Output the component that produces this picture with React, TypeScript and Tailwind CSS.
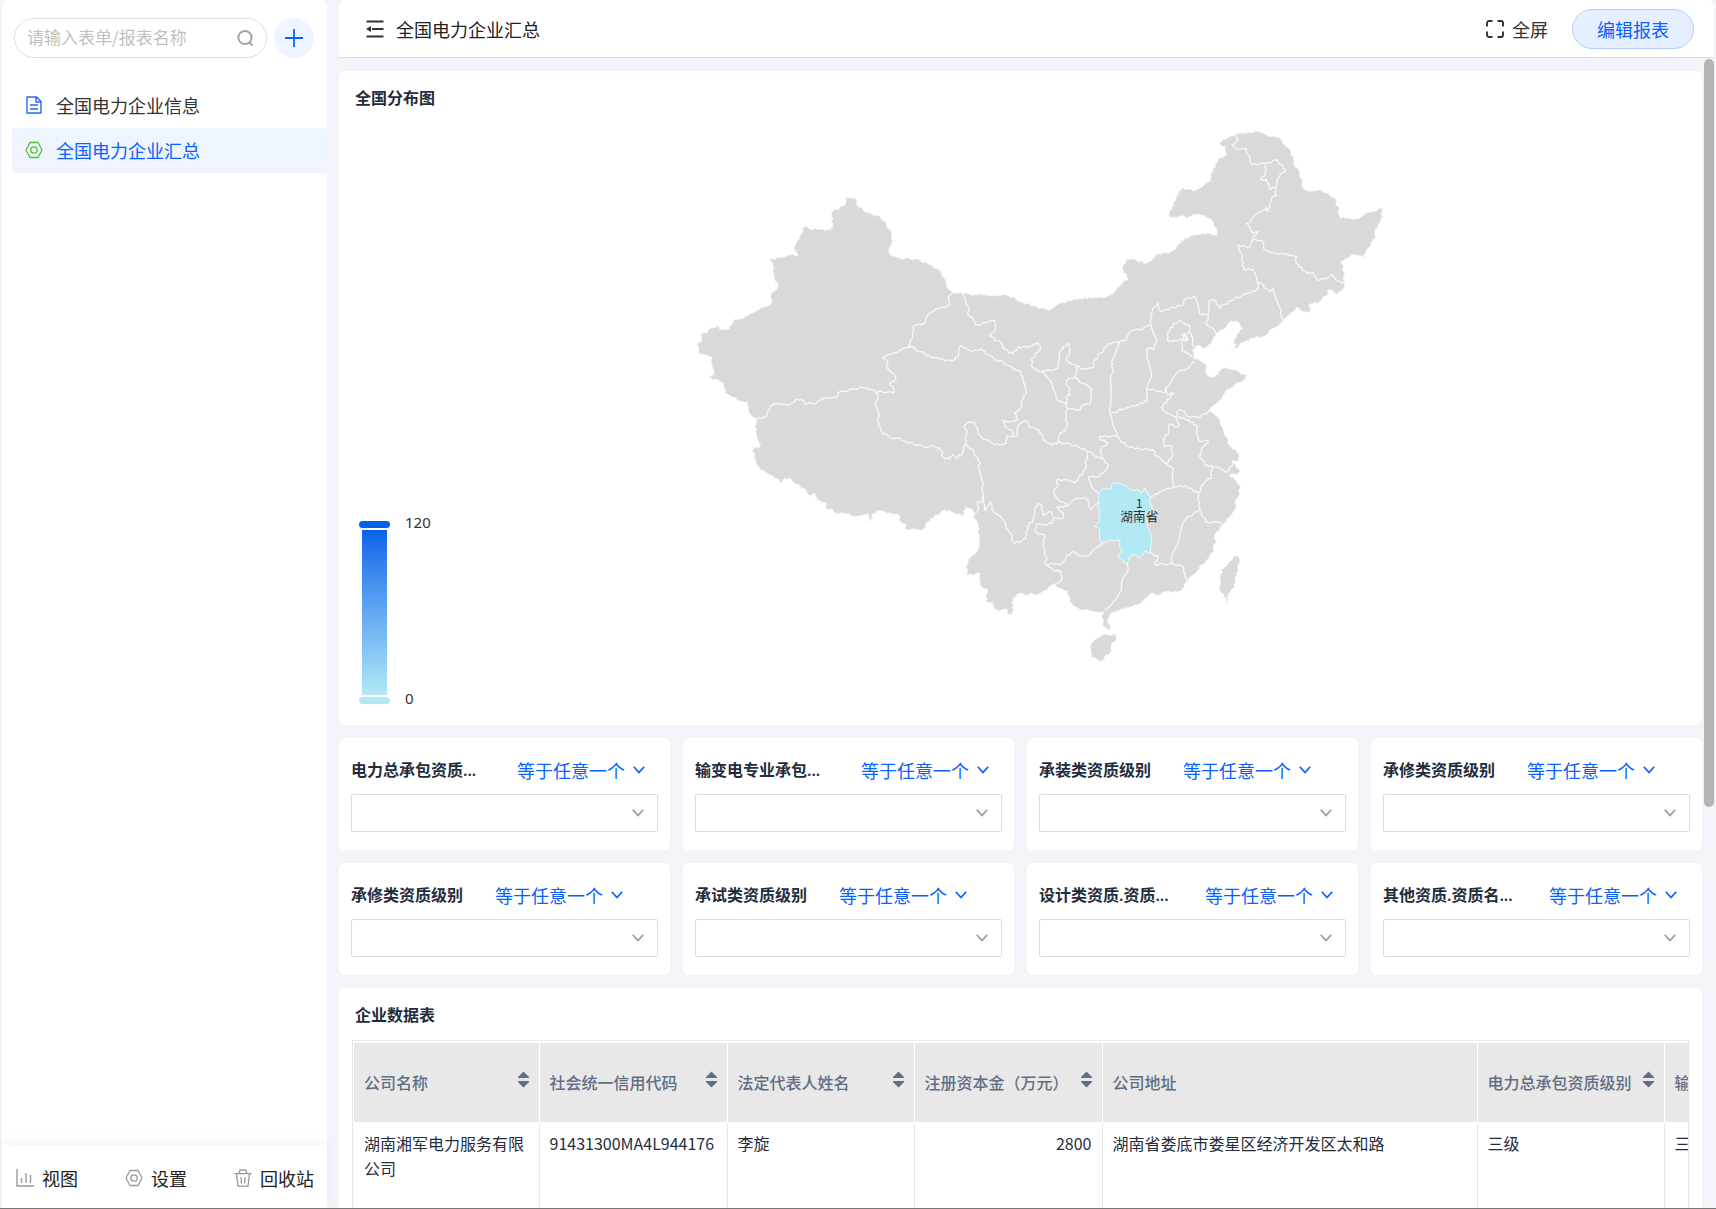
import type { ReactNode } from "react"

type Part = [number, number, string]

// country outline, traced clockwise: [offset x, offset y, points]
const outline: Part[] = [
    [1260, 0, "358,100 370,89 390,78 405,75 440,70 465,65 485,67 500,74 510,80 530,82 545,90 555,105 570,118 573,135 583,150 585,170 600,188 602,205 608,215 607,230 620,242 640,242 660,240 690,255 710,272 708,280 718,292 715,303 725,325 745,323 775,327 795,313 820,305 852,294 845,312 850,322 835,343 825,365 827,378 818,395 808,412 800,425 792,443 770,435 757,433 745,445 725,453 730,475 734,495 733,518 730,538 712,553 705,550 697,540 685,540 685,555 670,560 660,575 630,582 630,605 612,605 590,593 575,608 550,632 520,655 492,678 460,685 430,697 413,713 395,726 412,705 402,695 410,680 430,655 420,640 412,634 395,632 375,655 350,668"],
    [780, 510, "828,160 820,180 805,200 790,208 782,198 770,197 758,212 762,235 790,248 802,258 800,280 815,292 830,285 842,272 860,262 880,270 900,278 920,285 915,300 890,310 865,328 850,345 830,370 808,392 840,420 850,450 865,480 868,495 895,520 900,545 875,540 880,548 900,570 895,580 870,585 885,600 900,615 900,640 888,660 885,690 865,715 850,735 825,765 828,790 820,800 822,815 800,840 785,855 775,870 760,885 740,902 730,925 710,935 680,935 655,945 635,940 615,955 605,970 570,980 540,990 510,1003 503,1020 513,1040 505,1050 492,1040 488,1015 490,995 450,992 415,985 395,968 385,945 385,932 355,925 345,912 325,925 305,938 290,945 275,938 265,945 240,940 218,955 220,1005 205,1005 200,985 180,995 165,985 160,968 138,965 145,930 125,920 122,880 82,885 82,855 85,840 115,810 118,770 115,735 108,718"],
    [0, 210, "885,1018 880,990 870,985 858,980 848,1010 820,995 795,990 770,1005 745,1025 730,1048 680,1050 675,1030 658,1020 660,1005 635,1000 600,992 580,1000 568,1030 565,1000 520,1008 490,998 475,1003 460,990 440,985 440,970 412,960 408,942 388,945 378,930 350,912 330,895 315,895 308,908 290,895 265,880 240,865 230,850 218,800 235,805 243,795 228,755 230,715 210,700 203,665 180,662 150,645 135,642 132,610 115,600 85,592 103,585 97,560 95,530 62,523 52,492 65,485 62,465 85,455 95,443 115,438 120,450 150,445 163,418 190,417 215,400 245,383 275,370 275,342 295,320 285,290 280,255 270,240 300,233 325,225 355,228 345,208 360,175 372,140 395,150 425,148 435,153 458,143 457,95 480,85 497,72 498,55 528,53 530,72 550,90 575,102 600,110 617,125 620,140 637,160 635,190 627,210 632,225 660,235 715,238 750,255 780,272 790,290 800,315 818,338 848,340"],
    [780, 510, "110,45 190,45 225,52 240,65 290,80 325,90 370,68 420,55 500,52 525,35 545,12"],
    [1260, 0, "85,505 68,475 80,450 95,447 140,460 175,432 200,430 230,413 245,392 270,380 310,370 352,375 350,355 330,325 300,312 280,313 265,325 245,317 215,323 207,313 217,290 245,233 280,243 310,230 333,213 333,195 355,150 380,135 378,110"],
]

const taiwan: Part = [780, 510, "895,828 885,828 868,845 850,865 840,895 840,930 855,950 862,972 865,940 882,925 890,880 898,850 898,835"]
const hainan: Part = [780, 510, "470,1075 490,1065 528,1062 530,1078 515,1095 515,1115 500,1125 485,1143 455,1130 453,1098"]
const hunan: Part = [780, 510, "475,640 490,625 515,625 520,610 535,610 560,618 575,632 595,630 605,640 618,625 625,645 635,650 632,670 640,690 615,705 622,740 635,770 632,820 615,815 595,835 590,825 570,830 565,848 550,848 545,835 535,830 545,815 540,780 515,780 485,790 480,745 462,740 480,725 475,680"]

const westBorders = [
    "818,338 808,347 810,373 795,382 778,385 765,390 745,405 733,430 703,437 698,465 692,490 683,503",
    "683,503 655,515 620,527 608,533 622,540 623,565 640,580 650,597 632,607 630,615 641,625 640,640 605,633 590,640",
    "590,640 575,628 548,622 520,628 480,635 470,653 440,653 410,670 375,670 365,658 350,657 330,675 280,670 265,690 260,710 232,717",
    "590,640 595,650 587,675 597,695 595,735 605,755 630,772 655,773 680,788 715,795 735,802 760,795 785,812 790,832 810,838 820,825 830,835 850,818 855,795",
    "683,503 705,500 712,513 735,520 755,533 785,535 815,545 835,530 843,497 880,515 905,505 925,525 945,540 970,545 1000,565 1020,572 1030,595 1040,635 1028,660 1022,685 1005,700 1015,718 990,725 968,720 975,740 1000,755 995,770 980,768",
    "855,795 862,760 853,740 868,725 885,730 900,765 935,790 960,795 980,790 983,768",
    "1000,770 1015,765 1015,738 1040,722 1050,742 1080,750 1090,780 1115,795 1135,787",
    "848,340 868,388 863,398 885,425 888,435 920,428 945,422 948,445 930,467 965,490 970,505 1000,522 1015,500 1045,503 1075,487 1082,505 1055,540 1058,562 1085,577",
    "855,795 880,808 895,840 902,852 895,860 905,885 910,940 908,965 895,965 895,990 885,1000",
    "908,950 918,992 930,965 945,1000 965,1010 985,1050 1005,1090 1038,1078 1043,1040 1060,1020 1062,1005 1075,970 1088,980 1088,1005 1115,995 1118,1010",
]

const eastBorders = [
    "305,275 325,270 355,265 358,225 370,200 390,192 392,210 380,240 410,258 405,293 385,298 380,315 390,325 390,345 380,350 380,375 350,355 340,320 318,285 305,275",
    "410,258 440,268 462,262 465,240 500,200 508,190 540,185",
    "405,293 430,310 452,325 450,372 425,378 422,390 385,385 380,375",
    "385,385 378,400 382,440 360,465 355,487",
    "540,185 530,215 515,245 520,270 513,300 515,360 508,400",
    "540,185 560,178 575,153 605,150 635,135 632,105 645,80 655,68 663,95 700,82 730,75 740,55 765,50 775,70 778,100 805,105 812,60 830,65 838,85 870,62 920,42 950,30 960,8",
    "805,105 800,130 820,145 828,160",
    "635,135 640,160 650,180 645,205 625,205 620,235 635,275 630,305 620,325 620,365 590,375 560,383 510,403",
    "620,325 675,338 680,322 685,345 702,340 665,383 685,400 710,410",
    "680,322 695,305 710,280 750,260 765,245",
    "683,160 690,150 705,130 722,120 735,130 748,135 748,155 735,165 740,180 720,178 700,185 683,180 683,160",
    "748,155 760,175 758,190 765,200",
    "735,165 725,190 727,215 740,220 758,228",
    "725,165 735,160 745,180 730,183",
    "510,403 520,430 532,468 480,470 485,480 505,490 485,505 485,535 445,515",
    "355,487 385,490 415,500 445,515",
    "532,468 560,498 600,508 640,510 650,528 680,550",
    "710,410 720,435 705,440 690,432 688,455 670,480 675,500 697,500 697,530 680,550 700,565 702,620",
    "710,410 715,392 735,395 745,410 780,413 808,392",
    "710,410 735,415 770,435 775,470 780,485 800,480 805,490 790,500 780,525 795,555 820,560 865,575 880,548",
    "820,560 815,595 795,605 775,640 780,690",
    "635,650 670,632 702,620 740,618 775,640",
    "445,515 443,530 435,570 405,610 385,600 350,600 355,615 342,635 358,660 385,678 410,655 440,655 455,690 475,670",
    "485,535 503,550 500,570 475,590 447,590 455,620 475,640",
    "385,678 350,682 372,700 370,715 340,715 338,730 290,735 288,755 315,768 310,800 320,830 318,855",
    "318,855 340,850 360,855 380,830 400,815 425,830 450,825 475,800 490,790",
    "318,855 340,870 365,875 365,900 345,912",
    "565,848 565,870 545,910 545,930 520,965 495,990",
    "780,690 740,715 720,755 715,790 700,820 695,850",
    "780,690 798,725 825,725 850,735",
    "630,820 655,828 645,855 695,850 730,860 740,902",
]

const northBorders = [
    "405,75 415,90 397,105 415,118 440,115 453,160 475,165 498,160 530,150 558,178 535,205 528,232 512,238 500,208 483,208 498,195 498,163",
    "530,232 530,258 515,265 505,305 500,292 440,340 460,370 475,365 460,380 460,390",
    "460,390 445,413 415,405 425,430 432,478 460,478 472,518 480,518",
    "460,390 488,392 492,415 510,428 550,430 590,440 590,460 620,490 640,488 655,513 700,495 710,512 733,518",
    "480,518 510,545 520,535 545,600 548,632",
]

const toPoints = ([dx, dy, list]: Part) =>
    list.split(" ").map((p) => {
        const [x, y] = p.split(",").map(Number)
        return [x + dx, y + dy]
    })

// breaks long edges into small steps, so coasts and borders are not ruler straight
function jagged(points: number[][], closed = false) {
    const src = closed ? [...points, points[0]] : points
    let d = `M${src[0].join(" ")}`
    for (let i = 1; i < src.length; i++) {
        const [x0, y0] = src[i - 1]
        const [x1, y1] = src[i]
        const len = Math.hypot(x1 - x0, y1 - y0)
        const steps = Math.max(1, Math.round(len / 7))
        for (let s = 1; s < steps; s++) {
            const x = x0 + ((x1 - x0) * s) / steps
            const y = y0 + ((y1 - y0) * s) / steps
            const k = Math.sin(x * 12.9 + y * 78.2) * 3
            d += `L${(x - ((y1 - y0) / len) * k).toFixed(1)} ${(y + ((x1 - x0) / len) * k).toFixed(1)}`
        }
        d += `L${x1} ${y1}`
    }
    return closed ? d + "Z" : d
}

const landPath = jagged(outline.flatMap(toPoints), true)
const borderPath = [
    ...westBorders.map((b) => toPoints([0, 210, b])),
    ...eastBorders.map((b) => toPoints([780, 510, b])),
    ...northBorders.map((b) => toPoints([1260, 0, b])),
].map((b) => jagged(b)).join("")

const filters = [
    { id: 1, label: "电力总承包资质...", clipped: true },
    { id: 2, label: "输变电专业承包...", clipped: true },
    { id: 3, label: "承装类资质级别", clipped: false },
    { id: 4, label: "承修类资质级别", clipped: false },
    { id: 5, label: "承修类资质级别", clipped: false },
    { id: 6, label: "承试类资质级别", clipped: false },
    { id: 7, label: "设计类资质.资质...", clipped: true },
    { id: 8, label: "其他资质.资质名...", clipped: true },
]

const columns = [
    { title: "公司名称", sort: true },
    { title: "社会统一信用代码", sort: true },
    { title: "法定代表人姓名", sort: true },
    { title: "注册资本金（万元）", sort: true },
    { title: "公司地址", sort: false },
    { title: "电力总承包资质级别", sort: true },
    { title: "输变电专业承包", sort: false },
]

const row = ["湖南湘军电力服务有限公司", "91431300MA4L944176", "李旋", "2800", "湖南省娄底市娄星区经济开发区太和路", "三级", "三级"]

function Icon({ children, className, box = 18 }: { children: ReactNode; className: string; box?: number }) {
    return (
        <svg viewBox={`0 0 ${box} ${box}`} width={box} height={box} fill="none" stroke="currentColor" className={`shrink-0 ${className}`} aria-hidden="true">
            {children}
        </svg>
    )
}

function HexIcon({ className }: { className: string }) {
    return (
        <Icon className={className}>
            <path d="M5 1.5h8L17 9l-4 7.5H5L1 9z" strokeWidth="1.3" strokeLinejoin="round" />
            <circle cx="9" cy="9" r="3.2" strokeWidth="1.3" />
        </Icon>
    )
}

function Chevron({ className }: { className: string }) {
    return (
        <svg viewBox="0 0 12 8" width="12" height="8" fill="none" stroke="currentColor" strokeWidth="1.7" className={`pointer-events-none absolute top-1/2 -translate-y-1/2 ${className}`} aria-hidden="true">
            <path d="M0.8 0.8L6 6.6l5.2-5.8" />
        </svg>
    )
}

function Sidebar() {
    return (
        <aside className="flex w-[325px] shrink-0 flex-col rounded-t-md bg-white">
            <div className="flex items-center gap-[7px] pt-[18px] pr-[13px] pl-3">
                <label className="flex h-10 min-w-0 flex-1 items-center rounded-full border border-[#dedede] pr-3 pl-3">
                    <input type="text" placeholder="请输入表单/报表名称" aria-label="请输入表单/报表名称" className="min-w-0 flex-1 pb-[2px] text-[17px] outline-none placeholder:text-[#bfbfbf]" />
                    <Icon className="text-[#a3a3a3]">
                        <circle cx="9" cy="8.5" r="6.600" strokeWidth="2" />
                        <path d="M13 13l3.500 3.500" strokeWidth="2" />
                    </Icon>
                </label>
                <button type="button" aria-label="新建" className="flex size-10 items-center justify-center rounded-full bg-[#eef5ff] text-[#0a5fff]">
                    <Icon className="">
                        <path d="M9 0v18M0 9h18" strokeWidth="1.8" />
                    </Icon>
                </button>
            </div>
            <nav className="flex-1 pt-[25px] pl-[10px] text-lg">
                <a href="#info" className="flex h-[45px] items-center gap-[13px] pb-px pl-[13px] text-[#333]">
                    <Icon className="text-[#2468f2]">
                        <path d="M2 1h9.500L16 5.500V17H2zM11 1v5h5M5 9h8M5 13h8" strokeWidth="1.4" strokeLinejoin="round" />
                    </Icon>
                    全国电力企业信息
                </a>
                <a href="#summary" className="flex h-[45px] items-center gap-[13px] rounded-l bg-[#eef5ff] pb-px pl-[13px] text-[#0a5fff]">
                    <HexIcon className="text-[#56c02b]" />
                    全国电力企业汇总
                </a>
            </nav>
            <div className="flex h-[63px] items-center justify-between pt-[2px] pr-[13px] pl-[14px] text-lg text-[#222] shadow-[0_-4px_10px_rgba(0,0,0,0.04)]">
                <button type="button" className="flex items-center gap-2">
                    <Icon className="text-[#999]">
                        <path d="M1 0v17h17M5.500 14V9M10 14V4M14.500 14V6" strokeWidth="1.4" />
                    </Icon>
                    视图
                </button>
                <button type="button" className="flex items-center gap-2">
                    <HexIcon className="text-[#999]" />
                    设置
                </button>
                <button type="button" className="flex items-center gap-2">
                    <Icon className="text-[#999]">
                        <path d="M0.500 4.700h17M5 4.500L6 1h6l1 3.500M2.500 5l1.500 12.200h10L15.500 5M7 8l.5 6.500M11 8l-.5 6.500" strokeWidth="1.3" />
                    </Icon>
                    回收站
                </button>
            </div>
        </aside>
    )
}

function Header() {
    return (
        <header className="flex h-[58px] shrink-0 items-center border-b border-[#dcdcdc] bg-white pr-5 pl-[27px] text-lg rounded-t-md">
            <button type="button" aria-label="收起" className="mr-3 text-[#333]">
                <Icon className="">
                    <path d="M0.500 1.500h17M6 9h11.500M0.500 16.500h17" strokeWidth="1.8" />
                    <path d="M0 9l5-3v6z" fill="currentColor" stroke="none" />
                </Icon>
            </button>
            <h1 className="flex-1 text-[#222]">全国电力企业汇总</h1>
            <button type="button" className="mr-6 flex items-center gap-2 text-[#333]">
                <Icon className="">
                    <path d="M6.500 1H3a2 2 0 0 0-2 2v3.500M11.500 1H15a2 2 0 0 1 2 2v3.500M6.500 17H3a2 2 0 0 1-2-2v-3.500M11.500 17H15a2 2 0 0 0 2-2v-3.500" strokeWidth="1.9" />
                </Icon>
                全屏
            </button>
            <button type="button" className="h-10 rounded-full border border-[#b3d0ff] bg-[#e5efff] px-6 text-[#0a5fff]">编辑报表</button>
        </header>
    )
}

function MapCard() {
    return (
        <section className="rounded-md bg-white">
            <h2 className="px-4 pt-[14px] text-base leading-6 font-bold text-[#1f2d3d]">全国分布图</h2>
            <div className="grid h-[616px] grid-cols-[1fr_auto_1fr]">
                <div className="mb-[21px] ml-5 flex gap-[15px] self-end">
                    <div className="flex w-[31px] flex-col items-center">
                        <div className="h-[7px] w-full rounded-full bg-[#0562e8]"></div>
                        <div className="my-[2px] h-[165px] w-[25px] bg-linear-to-b from-[#0562e8] to-[#b3e8f5]"></div>
                        <div className="h-[7px] w-full rounded-full bg-[#b3e8f5]"></div>
                    </div>
                    <div className="-mt-[11px] -mb-[6px] flex flex-col justify-between font-['Noto_Sans'] text-[15px] leading-6 text-[#333]">
                        <span>120</span>
                        <span>0</span>
                    </div>
                </div>
                <svg viewBox="-86 -3 2220 1680" width="740" height="560" role="img" aria-label="全国分布图">
                    <g fill="#d9d9d9" stroke="#f3f3f3" strokeWidth="2">
                        <path d={landPath} />
                        <path d={jagged(toPoints(taiwan), true)} />
                        <path d={jagged(toPoints(hainan), true)} />
                    </g>
                    <path d={borderPath} fill="none" stroke="#f7f7f7" strokeWidth="4" strokeLinejoin="round" />
                    <path d={jagged(toPoints(hunan), true)} fill="#b3e8f5" stroke="#f7f7f7" strokeWidth="3" />
                    <g fill="#333" fontSize="38" textAnchor="middle">
                        <text x="1379" y="1195">1</text>
                        <text x="1379" y="1233">湖南省</text>
                    </g>
                </svg>
            </div>
        </section>
    )
}

function Filters() {
    return (
        <section className="grid grid-cols-4 gap-[13px]">
            {filters.map((filter) => (
                <div key={filter.id} className="h-[112px] rounded-md bg-white px-3 pt-[18px]">
                    <div className="mb-[10px] flex items-center">
                        <label htmlFor={`filter-${filter.id}`} className={`mr-8 font-['Noto_Sans','Noto_Sans_CJK_SC',sans-serif] text-base leading-7 font-semibold whitespace-nowrap text-[#1f2d3d] ${filter.clipped ? "w-[134px]" : ""}`}>
                            {filter.label}
                        </label>
                        <div className="relative text-[#0a5fff]">
                            <select aria-label={`${filter.label} 条件`} className="h-7 appearance-none pr-5 text-lg leading-7 outline-none">
                                <option>等于任意一个</option>
                            </select>
                            <Chevron className="right-0" />
                        </div>
                    </div>
                    <div className="relative text-[#999]">
                        <select id={`filter-${filter.id}`} className="block h-[38px] w-full appearance-none rounded-xs border border-[#dcdcdc] bg-white outline-none">
                            <option></option>
                        </select>
                        <Chevron className="right-[14px]" />
                    </div>
                </div>
            ))}
        </section>
    )
}

function DataTable() {
    return (
        <section className="rounded-t-md bg-white px-[13px] pb-6">
            <h2 className="px-[3px] pt-[14px] text-base leading-6 font-bold text-[#1f2d3d]">企业数据表</h2>
            <div className="mt-[14px] overflow-hidden border border-[#e8e8e8] pt-[2px] pl-px">
                <table className="w-[1497px] table-fixed border-collapse">
                    <colgroup>
                        <col className="w-[185px]" />
                        <col className="w-[188px]" />
                        <col className="w-[187px]" />
                        <col className="w-[188px]" />
                        <col className="w-[375px]" />
                        <col className="w-[187px]" />
                        <col className="w-[187px]" />
                    </colgroup>
                    <thead>
                        <tr>
                            {columns.map((column) => (
                                <th key={column.title} className="h-[79px] border-r border-b border-white bg-[#e8e8e8] px-[10px] text-left text-base font-medium whitespace-nowrap text-[#606e85]">
                                    <div className="flex items-center justify-between">
                                        {column.title}
                                        {column.sort && (
                                            <button type="button" aria-label="排序" className="-ml-3 pb-[6px]">
                                                <svg viewBox="0 0 11 17" width="11" height="17" fill="currentColor">
                                                    <path d="M5.500 0.500L11 6v1H0V6zM5.500 16.500L11 11v-1H0v1z" />
                                                </svg>
                                            </button>
                                        )}
                                    </div>
                                </th>
                            ))}
                        </tr>
                    </thead>
                    <tbody>
                        <tr>
                            {row.map((cell, i) => (
                                <td key={i} className={`h-[112px] border-r border-[#e8e8e8] px-[10px] py-2 align-top text-base leading-[25px] text-[#1f2d3d] ${i === 3 ? "text-right" : ""}`}>{cell}</td>
                            ))}
                        </tr>
                    </tbody>
                </table>
            </div>
        </section>
    )
}

export default function App() {
    return (
        <div className="flex h-screen gap-3 overflow-hidden border-b border-[#777] bg-[#f3f4f9] px-[2px] font-['Noto_Sans_CJK_SC',sans-serif]">
            <Sidebar />
            <div className="flex min-w-0 flex-1 flex-col">
                <Header />
                <div className="flex min-h-0 flex-1 gap-[2px]">
                    <main className="flex min-w-0 flex-1 flex-col gap-[13px] overflow-hidden pt-[13px] *:shrink-0">
                        <MapCard />
                        <Filters />
                        <DataTable />
                    </main>
                    <div className="mt-px h-[65%] w-[10px] rounded-full bg-[#b3b3b3]"></div>
                </div>
            </div>
        </div>
    )
}
